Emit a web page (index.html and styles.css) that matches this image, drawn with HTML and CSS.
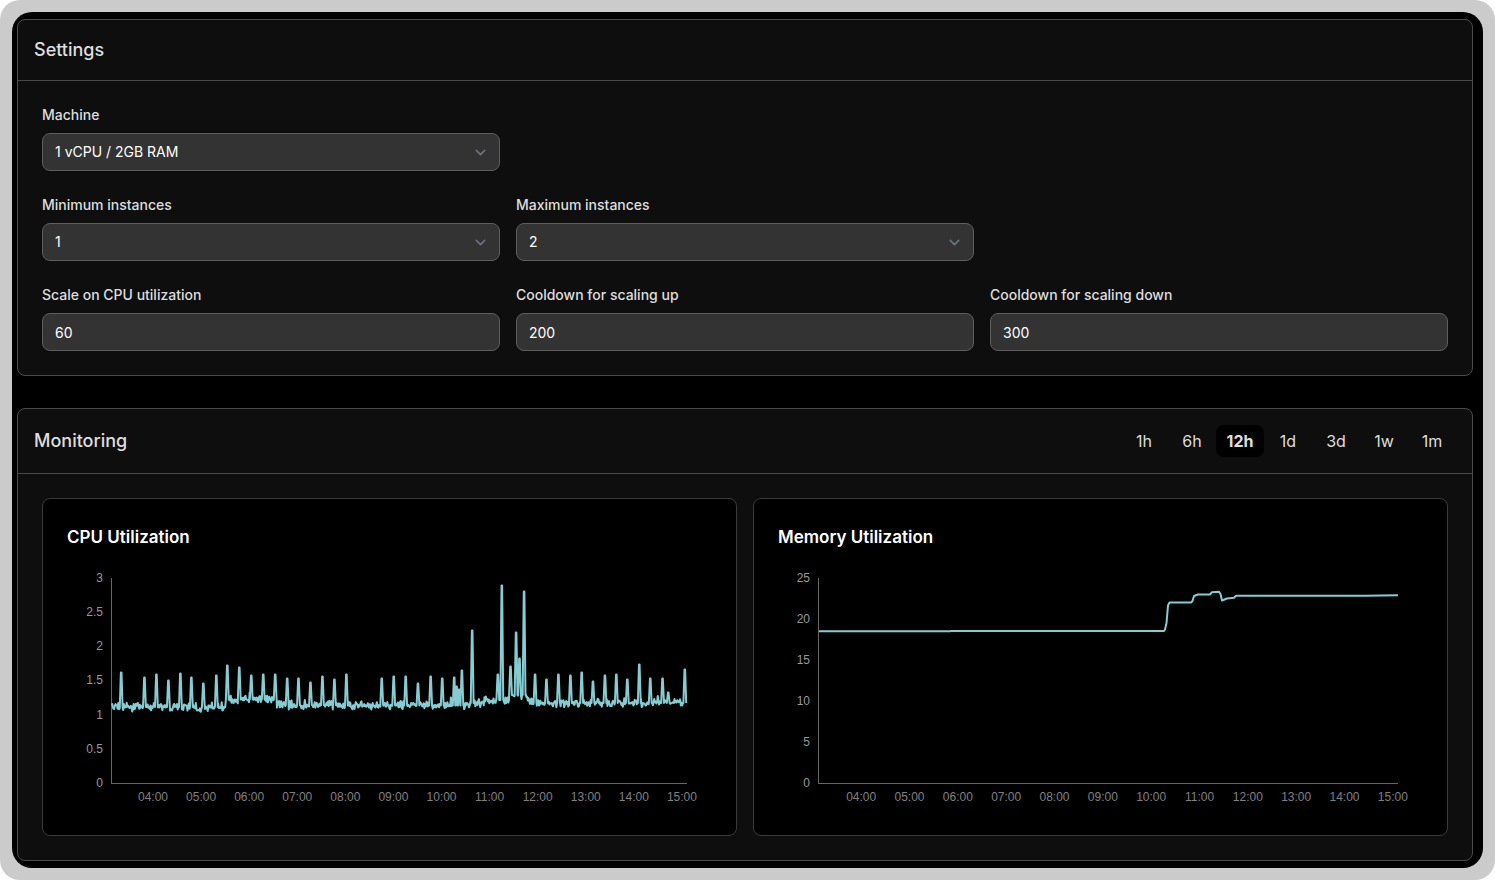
FILE: index.html
```html
<!DOCTYPE html>
<html lang="en">
<head>
<meta charset="utf-8">
<title>Settings and monitoring</title>
<link rel="stylesheet" href="styles.css">
</head>
<body>
<div class="frame">
  <main class="screen">
    <section class="card">
      <header class="card-header"><h2 class="card-title">Settings</h2></header>
      <form class="card-body form-grid">
        <div class="field first">
          <label for="machine">Machine</label>
          <div class="select-wrap">
            <select id="machine" class="control"><option>1 vCPU / 2GB RAM</option></select>
            <svg class="chevron" viewBox="0 0 20 20" aria-hidden="true"><path d="M6 8l4 4 4-4"/></svg>
          </div>
        </div>
        <div class="field first">
          <label for="min">Minimum instances</label>
          <div class="select-wrap">
            <select id="min" class="control"><option>1</option></select>
            <svg class="chevron" viewBox="0 0 20 20" aria-hidden="true"><path d="M6 8l4 4 4-4"/></svg>
          </div>
        </div>
        <div class="field">
          <label for="max">Maximum instances</label>
          <div class="select-wrap">
            <select id="max" class="control"><option>2</option></select>
            <svg class="chevron" viewBox="0 0 20 20" aria-hidden="true"><path d="M6 8l4 4 4-4"/></svg>
          </div>
        </div>
        <div class="field first">
          <label for="cpu">Scale on CPU utilization</label>
          <input id="cpu" class="control" type="text" value="60">
        </div>
        <div class="field">
          <label for="up">Cooldown for scaling up</label>
          <input id="up" class="control" type="text" value="200">
        </div>
        <div class="field">
          <label for="down">Cooldown for scaling down</label>
          <input id="down" class="control" type="text" value="300">
        </div>
      </form>
    </section>

    <section class="card">
      <header class="card-header">
        <h2 class="card-title">Monitoring</h2>
        <div class="ranges">
          <button class="range" type="button">1h</button>
          <button class="range" type="button">6h</button>
          <button class="range active" type="button">12h</button>
          <button class="range" type="button">1d</button>
          <button class="range" type="button">3d</button>
          <button class="range" type="button">1w</button>
          <button class="range" type="button">1m</button>
        </div>
      </header>
      <div class="card-body charts">
        <article class="panel">
          <h3 class="panel-title">CPU Utilization</h3>
          <div class="chart cpu">
            <div class="plot-row">
              <div class="y-axis"><span>3</span><span>2.5</span><span>2</span><span>1.5</span><span>1</span><span>0.5</span><span>0</span></div>
              <svg class="plot" viewBox="0 0 576 205" preserveAspectRatio="none" role="img" aria-label="CPU utilization over 12 hours"><path id="cpu-line" class="line" d=""/></svg>
            </div>
            <div class="x-axis"><span>04:00</span><span>05:00</span><span>06:00</span><span>07:00</span><span>08:00</span><span>09:00</span><span>10:00</span><span>11:00</span><span>12:00</span><span>13:00</span><span>14:00</span><span>15:00</span></div>
          </div>
        </article>
        <article class="panel">
          <h3 class="panel-title">Memory Utilization</h3>
          <div class="chart memory">
            <div class="plot-row">
              <div class="y-axis"><span>25</span><span>20</span><span>15</span><span>10</span><span>5</span><span>0</span></div>
              <svg class="plot" viewBox="0 0 579 205" preserveAspectRatio="none" role="img" aria-label="Memory utilization over 12 hours"><path class="line" d="M0 53.3L131 53.2L132 53H345L346 51.5L347.5 45L349 27.5L350.5 24.5H372L373.5 23L375 18L379 16.5H391L393 14.2L400 13.8L401.5 16L403 22.5L408 20.5L415 19.8L417 17.8H546L579 17.2"/></svg>
            </div>
            <div class="x-axis"><span>04:00</span><span>05:00</span><span>06:00</span><span>07:00</span><span>08:00</span><span>09:00</span><span>10:00</span><span>11:00</span><span>12:00</span><span>13:00</span><span>14:00</span><span>15:00</span></div>
          </div>
        </article>
      </div>
    </section>
  </main>
</div>
<script src="chart.js"></script>
</body>
</html>
```
FILE: styles.css
```css
* { box-sizing: border-box; }

body {
  margin: 0;
  background: #fff;
  color: #dedede;
  font-family: Inter, "Liberation Sans", sans-serif;
  font-size: 14px;
  line-height: 20px;
}

h2, h3 { margin: 0; }

.frame {
  padding: 12px;
  background: #cbcbcb;
  border-radius: 20px;
}

.screen {
  display: flex;
  flex-direction: column;
  gap: 32px;
  padding: 7px 10px 7px 5px;
  background: #000;
  border-radius: 20px;
}

.card {
  background: #0e0e0e;
  border: 1px solid #4a4a4a;
  border-radius: 8px;
}

.card-header {
  display: flex;
  align-items: center;
  justify-content: space-between;
  padding: 16px;
  border-bottom: 1px solid #4a4a4a;
}

.card-title {
  font-size: 18px;
  font-weight: 500;
  line-height: 28px;
}

.card-body { padding: 24px; }

.form-grid {
  display: grid;
  grid-template-columns: repeat(3, 1fr);
  gap: 24px 16px;
}

.field {
  display: flex;
  flex-direction: column;
  gap: 8px;
}

.first { grid-column-start: 1; }

.field label { font-weight: 500; }

.select-wrap { position: relative; }

.control {
  display: block;
  width: 100%;
  height: 38px;
  padding: 0 12px;
  appearance: none;
  background: #333;
  border: 1px solid #5e5e5e;
  border-radius: 8px;
  color: #fff;
  font: inherit;
}

.chevron {
  position: absolute;
  top: 9px;
  right: 9px;
  width: 21px;
  height: 21px;
  fill: none;
  stroke: #6b7280;
  stroke-width: 1.5;
  stroke-linecap: round;
  stroke-linejoin: round;
  pointer-events: none;
}

.ranges { display: flex; }

.range {
  width: 48px;
  height: 32px;
  padding: 0;
  background: transparent;
  border: 0;
  border-radius: 8px;
  color: inherit;
  font: inherit;
  font-size: 16px;
}

.range.active {
  background: #000;
  font-weight: 700;
}

.charts {
  display: grid;
  grid-template-columns: repeat(2, minmax(0, 1fr));
  gap: 16px;
}

.panel {
  padding: 24px;
  background: #000;
  border: 1px solid #3a3a3a;
  border-radius: 8px;
}

.panel-title {
  color: #fff;
  font-size: 17px;
  font-weight: 600;
  line-height: 28px;
}

.chart {
  padding: 20px 0 7px;
  color: #999;
  font-family: "Liberation Sans", Arial, sans-serif;
  font-size: 12px;
  line-height: 14px;
}

.plot-row {
  display: flex;
  gap: 8px;
  padding-right: 25px;
}

.y-axis {
  display: flex;
  flex-direction: column;
  justify-content: space-between;
  height: 219px;
  text-align: right;
}

.cpu .y-axis { width: 36px; }
.memory .y-axis { width: 32px; }

.plot {
  flex: 1;
  min-width: 0;
  height: 206px;
  margin-top: 7px;
  border-left: 1px solid #666;
  border-bottom: 1px solid #666;
  overflow: visible;
}

.line {
  fill: none;
  stroke: #86cdd3;
  stroke-width: 2;
  stroke-linejoin: round;
  vector-effect: non-scaling-stroke;
}

.x-axis {
  display: grid;
  grid-template-columns: repeat(12, 1fr);
  color: #808080;
  text-align: center;
}

.cpu .x-axis { padding: 0 6px 0 62px; }
.memory .x-axis { padding: 0 6px 0 59px; }
```
FILE: chart.js
```js
// Load peaks: [x, y] in plot units, y measured down from the top of the axis.
const peaks = [
  [9.2, 94], [32.5, 99], [44.5, 96], [56.5, 102], [68.5, 95], [79.5, 99], [91.5, 105], [104.5, 97],
  [115.5, 87], [127.5, 89], [139.5, 97], [151.5, 96], [163.5, 96], [175.5, 100], [186.8, 100],
  [198.8, 104], [210.8, 98], [222.8, 101], [234.8, 96], [270.2, 100], [282.2, 98],
  [294.2, 98], [306.5, 105], [319.2, 98], [330.8, 100], [342.8, 99], [345.2, 108],
  [347.5, 111], [350.5, 92], [360.8, 52], [386.5, 96], [390.5, 7], [399.2, 88], [404.8, 54],
  [408.2, 80], [412.8, 13], [423.8, 96], [435.2, 101], [447.2, 96], [459.2, 97],
  [470.5, 94], [481.8, 103], [493.8, 97], [505.2, 96], [516.2, 101], [528.2, 86],
  [539.2, 100], [551.5, 100], [557.2, 114], [573.8, 91]
];

// Idle load: [x where the level ends, level].
const levels = [
  [115, 129], [165, 121.5], [230, 127], [359, 127.5], [373, 125], [399, 122],
  [416, 117], [418, 122], [576, 125]
];

let seed = 17;
function random() {
  seed = (seed * 16807) % 2147483647;
  return seed / 2147483647;
}

const points = [];
for (let x = 0; x <= 574; x += 0.7) {
  if (peaks.some(([px]) => Math.abs(px - x) < 1.4)) continue;
  const level = levels.find(([end]) => x <= end)[1];
  const swing = (random() + random() - 1) * 5;
  const burst = random() > 0.96 ? -4 : 0;
  points.push([x, level + swing + burst]);
}
for (const [x, y] of peaks) {
  const level = levels.find(([end]) => x <= end)[1];
  points.push([x - 1.4, level], [x - 0.3, y + 0.5], [x + 0.3, y + 0.5], [x + 1.4, level]);
}
points.sort((a, b) => a[0] - b[0]);

document.getElementById('cpu-line').setAttribute(
  'd', 'M' + points.map(([x, y]) => x.toFixed(1) + ' ' + y.toFixed(1)).join('L')
);
```
